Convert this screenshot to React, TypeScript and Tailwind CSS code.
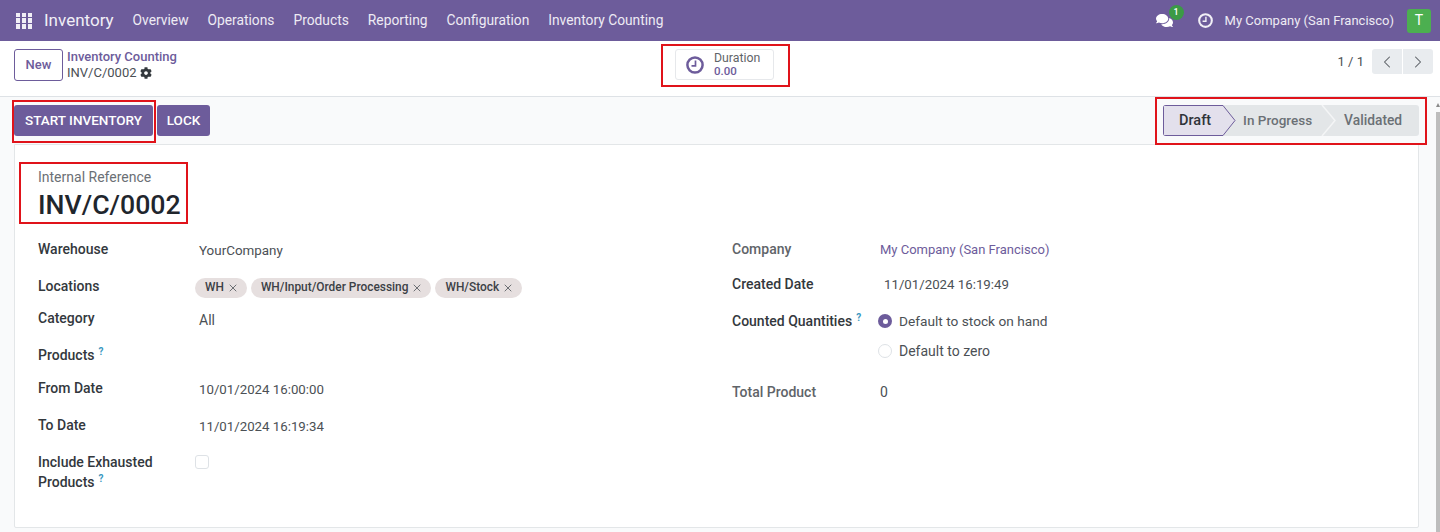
import React from "react";
import { ChevronLeft, ChevronRight, X } from "lucide-react";
import { FaCog, FaComments } from "react-icons/fa";

const RedBox = ({ className }: { className: string }) => (
  <div className={"pointer-events-none absolute border-2 border-[#e0131a] " + className} />
);

const Help = () => <sup className="ml-1 text-[10px] font-bold leading-none text-[#3a97c0]">?</sup>;

const Clock = ({ size, className }: { size: number; className: string }) => (
  <svg width={size} height={size} viewBox="0 0 18 18" fill="none" stroke="currentColor" className={className}>
    <circle cx="9" cy="9" r="7.6" strokeWidth="2.5" />
    <path d="M9.500 4.500V9.800H5.500" strokeWidth="1.700" />
  </svg>
);

const Label = ({ children, muted }: { children: React.ReactNode; muted?: boolean }) => (
  <div className={"w-[161px] shrink-0 text-[14px] font-medium leading-[20px] " + (muted ? "text-[#5f6469]" : "text-[#33383d]")}>
    {children}
  </div>
);

const Tag = ({ text }: { text: string }) => (
  <span className="flex h-[20px] items-center gap-[3px] rounded-full bg-[#e6dfdf] pl-[10px] pr-[8px] text-[11.900px] font-medium text-[#3c4146]">
    {text}
    <X size={12} strokeWidth={1.75} className="text-[#5a5f64]" />
  </span>
);

const nav = ["Overview", "Operations", "Products", "Reporting", "Configuration", "Inventory Counting"];

export default function App() {
  return (
    <div className="relative flex h-[532px] w-[1440px] flex-col overflow-hidden bg-[#f9fafb] font-['Roboto',sans-serif] text-[14px] text-[#4b5055]">
      <header className="flex h-[41px] shrink-0 items-center bg-[#6d5c9b] text-white">
        <div className="ml-[16px] grid h-[16px] w-[16px] grid-cols-3 gap-[1.5px]">
          {Array.from({ length: 9 }).map((_, i) => (
            <span key={i} className="bg-[#f1eff6]" />
          ))}
        </div>
        <span className="ml-[12px] text-[17px] text-[#f1eff6]">Inventory</span>
        <nav className="ml-[19px] flex gap-[19px] text-[13.800px] text-[#eeebf4]">
          {nav.map((n) => (
            <span key={n}>{n}</span>
          ))}
        </nav>
        <div className="ml-auto flex items-center">
          <div className="relative mr-[25px]">
            <FaComments size={17} className="text-white" />
            <span className="absolute -right-[11px] -top-[7px] flex h-[15px] w-[15px] items-center justify-center rounded-full bg-[#3b9a45] text-[9px] font-medium text-white">
              1
            </span>
          </div>
          <Clock size={15} className="mr-[12px] text-[#f1eff6]" />
          <span className="mr-[13px] text-[13px] text-[#eeebf4]">My Company (San Francisco)</span>
          <span className="mr-[9px] flex h-[24px] w-[24px] items-center justify-center rounded-[3px] bg-[#4caf50] text-[14px] text-white">T</span>
        </div>
      </header>

      <section className="flex h-[56px] shrink-0 border-b border-[#dee2e6] bg-white">
        <div className="flex w-[661px] shrink-0 pl-[14px] pt-[8px]">
          <button className="h-[32px] w-[49px] rounded-[3px] border border-[#6d5c9b] text-[13px] font-medium text-[#6d5c9b]">New</button>
          <div className="ml-[4px] leading-[16px]">
            <div className="text-[13px] font-medium text-[#6d5c9b]">Inventory Counting</div>
            <div className="flex items-center gap-[3px] text-[13px] text-[#4b5055]">
              INV/C/0002 <FaCog size={12} className="text-[#33383d]" />
            </div>
          </div>
        </div>
        <div className="ml-[14px] mt-[8px] flex h-[31px] w-[99px] items-center rounded-[3px] border border-[#e6e8eb] pl-[10px]">
          <Clock size={18} className="text-[#6d5c9b]" />
          <div className="ml-[10px] text-[12.300px] leading-[13px]">
            <div className="text-[#5f6469]">Duration</div>
            <div className="text-[11.500px] font-medium text-[#6d5c9b]">0.00</div>
          </div>
        </div>
        <div className="ml-auto mr-[7px] mt-[8px] flex h-[25px] items-center">
          <span className="mr-[8px] text-[13px] text-[#4b5055]">1 / 1</span>
          <span className="flex h-[25px] w-[30px] items-center justify-center rounded-l-[3px] bg-[#e9ecef]">
            <ChevronLeft size={20} strokeWidth={1.25} className="text-[#555a5f]" />
          </span>
          <span className="ml-[1px] flex h-[25px] w-[30px] items-center justify-center rounded-r-[3px] bg-[#e9ecef]">
            <ChevronRight size={20} strokeWidth={1.25} className="text-[#555a5f]" />
          </span>
        </div>
      </section>

      <section className="flex h-[47px] shrink-0 items-center pl-[14px] pr-[21px]">
        <button className="flex h-[31px] w-[139px] items-center justify-center rounded-[3px] bg-[#6d5c9b] text-[13.500px] font-medium text-white">START INVENTORY</button>
        <button className="ml-[4px] flex h-[31px] w-[53px] items-center justify-center rounded-[3px] bg-[#6d5c9b] text-[13.500px] font-medium text-white">LOCK</button>
        <div className="ml-auto flex h-[31px] w-[256px] overflow-hidden rounded-[3px] bg-[#e3e6e8] font-medium text-[#6b7075]">
          <div className="relative h-full">
            <svg width="256" height="31" viewBox="0 0 256 31" className="absolute left-0 top-0">
              <path d="M.5.5H60L72 15.500 60 30.500H.5Z" fill="#e3e0ec" stroke="#6d5c9b" />
              <path d="M159 0l13 15.500-13 15.500" fill="none" stroke="#f4f5f6" strokeWidth="1.500" />
            </svg>
          </div>
          <span className="relative ml-[16px] text-[14.500px] leading-[31px] text-[#2f3439]">Draft</span>
          <span className="relative ml-[32px] text-[13.500px] leading-[31px]">In Progress</span>
          <span className="relative ml-[32px] text-[13.800px] leading-[31px]">Validated</span>
        </div>
      </section>

      <main className="ml-[14px] mr-[21px] flex h-[384px] shrink-0 flex-col rounded-b-[2px] border border-[#e3e6e8] bg-white pl-[23px]">
        <div className="mt-[23px] text-[14px] leading-[18px] text-[#6b7075]">Internal Reference</div>
        <div className="mt-[1px] text-[26.700px] font-medium leading-[36px] text-[#1f262d]">INV/C/0002</div>
        <div className="mt-[16px] flex">
          <div className="w-[694px] shrink-0">
            <div className="flex h-[37px]">
              <Label>Warehouse</Label>
              <span className="mt-[2px] text-[13.400px]">YourCompany</span>
            </div>
            <div className="flex h-[32px]">
              <Label>Locations</Label>
              <div className="-ml-[4px] mt-[2px] flex gap-[4px]">
                <Tag text="WH" />
                <Tag text="WH/Input/Order Processing" />
                <Tag text="WH/Stock" />
              </div>
            </div>
            <div className="flex h-[37px]">
              <Label>Category</Label>
              <span className="mt-[2px]">All</span>
            </div>
            <div className="flex h-[33px]">
              <Label>
                Products
                <Help />
              </Label>
            </div>
            <div className="flex h-[37px]">
              <Label>From Date</Label>
              <span className="mt-[2px] text-[13.250px]">10/01/2024 16:00:00</span>
            </div>
            <div className="flex h-[37px]">
              <Label>To Date</Label>
              <span className="mt-[2px] text-[13.250px]">11/01/2024 16:19:34</span>
            </div>
            <div className="flex">
              <Label>
                Include Exhausted
                <br />
                Products
                <Help />
              </Label>
              <span className="-ml-[4px] mt-[3px] h-[14px] w-[14px] rounded-[3px] border border-[#dee2e6] bg-white" />
            </div>
          </div>
          <div>
            <div className="flex h-[35px]">
              <div className="w-[148px] shrink-0 font-medium leading-[20px] text-[#5f6469]">Company</div>
              <span className="mt-[1px] text-[13px] text-[#6d5c9b]">My Company (San Francisco)</span>
            </div>
            <div className="flex h-[37px]">
              <div className="w-[148px] shrink-0 font-medium leading-[20px] text-[#33383d]">Created Date</div>
              <span className="ml-[4px] mt-[1px] text-[13.250px]">11/01/2024 16:19:49</span>
            </div>
            <div className="flex h-[30px]">
              <div className="w-[146px] shrink-0 font-medium leading-[20px] text-[#33383d]">
                Counted Quantities
                <Help />
              </div>
              <span className="mt-[3px] flex h-[14px] w-[14px] items-center justify-center rounded-full bg-[#6d5c9b]">
                <span className="h-[5px] w-[5px] rounded-full bg-white" />
              </span>
              <span className="ml-[7px] text-[13.700px]">Default to stock on hand</span>
            </div>
            <div className="flex h-[41px]">
              <span className="ml-[146px] mt-[3px] h-[14px] w-[14px] rounded-full border border-[#dee2e6]" />
              <span className="ml-[7px]">Default to zero</span>
            </div>
            <div className="flex">
              <div className="w-[148px] shrink-0 font-medium leading-[20px] text-[#5f6469]">Total Product</div>
              <span>0</span>
            </div>
          </div>
        </div>
      </main>

      <div className="absolute right-0 top-[103px] h-0 w-0 border-x-[2px] border-b-[4px] border-x-transparent border-b-[#8a8a8a]" />
      <div className="absolute right-0 top-[112px] h-[420px] w-[4px] bg-[#bdbdbd]" />

      <RedBox className="left-[661px] top-[44px] h-[43px] w-[129px]" />
      <RedBox className="left-[12px] top-[100px] h-[43px] w-[144px]" />
      <RedBox className="left-[1155px] top-[97px] h-[48px] w-[272px]" />
      <RedBox className="left-[19px] top-[162px] h-[62px] w-[169px]" />
    </div>
  );
}
